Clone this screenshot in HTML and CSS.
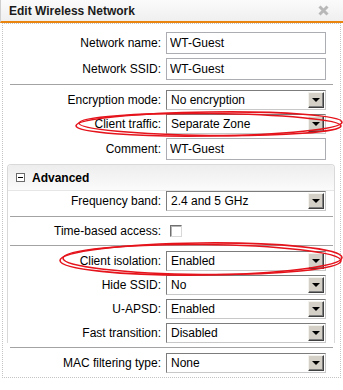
FILE: index.html
```html
<!DOCTYPE html>
<html>
<head>
    <title>Edit Wireless Network</title>
    <link rel="stylesheet" href="styles.css">
</head>
<body>
    <div class="dialog">
        <div class="titlebar">
            <span class="title">Edit Wireless Network</span>
            <svg class="close" width="11" height="11" viewBox="0 0 11 11">
                <path d="M1.5 1.5 L9.5 9.5 M9.5 1.5 L1.5 9.5" stroke="#b8b8b8" stroke-width="3"/>
            </svg>
        </div>

        <div class="content">
            <div class="row">
                <label>Network name:</label>
                <input class="text" type="text" value="WT-Guest">
            </div>
            <div class="row">
                <label>Network SSID:</label>
                <input class="text" type="text" value="WT-Guest">
            </div>
            <div class="sep"></div>
            <div class="row">
                <label>Encryption mode:</label>
                <div class="combo"><span>No encryption</span><span class="btn"></span></div>
            </div>
            <div class="row">
                <label>Client traffic:</label>
                <div class="combo"><span>Separate Zone</span><span class="btn"></span></div>
            </div>
            <div class="row">
                <label>Comment:</label>
                <input class="text" type="text" value="WT-Guest">
            </div>

            <div class="panel">
                <div class="panel-head">
                    <span class="toggle"></span>
                    <span>Advanced</span>
                </div>
                <div class="panel-body">
                    <div class="row">
                        <label>Frequency band:</label>
                        <div class="combo"><span>2.4 and 5 GHz</span><span class="btn"></span></div>
                    </div>
                    <div class="sep"></div>
                    <div class="row tall">
                        <label>Time-based access:</label>
                        <span class="check"></span>
                    </div>
                    <div class="sep after"></div>
                    <div class="row">
                        <label>Client isolation:</label>
                        <div class="combo"><span>Enabled</span><span class="btn"></span></div>
                    </div>
                    <div class="row">
                        <label>Hide SSID:</label>
                        <div class="combo"><span>No</span><span class="btn"></span></div>
                    </div>
                    <div class="row">
                        <label>U-APSD:</label>
                        <div class="combo"><span>Enabled</span><span class="btn"></span></div>
                    </div>
                    <div class="row">
                        <label>Fast transition:</label>
                        <div class="combo"><span>Disabled</span><span class="btn"></span></div>
                    </div>
                </div>
            </div>

            <div class="sep"></div>
            <div class="row last">
                <label>MAC filtering type:</label>
                <div class="combo"><span>None</span><span class="btn"></span></div>
            </div>
        </div>

        <!-- hand-drawn highlight marks -->
        <svg class="marks" width="343" height="390" viewBox="0 0 343 390">
            <g fill="none" stroke="#e5131b" stroke-width="1.6">
                <ellipse cx="209" cy="124" rx="133" ry="12" transform="rotate(-0.8 209 124)"/>
                <ellipse cx="210" cy="124.5" rx="131" ry="11" transform="rotate(0.6 210 124)"/>
                <ellipse cx="201" cy="259" rx="141" ry="16" transform="rotate(-0.6 201 259)"/>
                <ellipse cx="202" cy="259.5" rx="139" ry="15" transform="rotate(0.5 201 259)"/>
            </g>
        </svg>
    </div>
</body>
</html>
```

FILE: styles.css
```css
body {
    margin: 0;
    background-color: #fff;
    font-family: "Liberation Sans", Arial, sans-serif;
    font-size: 12px;
    color: #000;
}

.dialog {
    position: relative;
    width: 343px;
    height: 390px;
}

.titlebar {
    height: 21px;
    display: flex;
    align-items: center;
    justify-content: space-between;
    padding: 0 14px 0 8px;
    border-left: 1px solid #cfcfcf;
    border-bottom: 2px solid #ea850f;
    background: linear-gradient(#fbfbfb, #efefef);
}

.title {
    font-weight: bold;
    color: #1a1a1a;
    padding-top: 1px;
}

.close {
    display: block;
}

.content {
    margin: 0 2px;
    padding: 8px 0 4px;
    border: 1px dotted #c4c4c4;
}

.row {
    display: flex;
    align-items: center;
    margin-bottom: 4px;
}

.row label {
    width: 158px;
    margin-right: 5px;
    text-align: right;
    white-space: nowrap;
}

.row.tall {
    height: 28px;
    margin-bottom: 0;
}

.row.last {
    margin-bottom: 0;
}

.text {
    width: 160px;
    height: 22px;
    box-sizing: border-box;
    margin: 0;
    padding: 0 3px;
    border: 1px solid #abadb3;
    font-family: inherit;
    font-size: 12px;
    color: #000;
    outline: none;
}

.combo {
    width: 160px;
    height: 20px;
    box-sizing: border-box;
    display: flex;
    align-items: center;
    justify-content: space-between;
    padding: 0 1px 0 4px;
    border: 1px solid;
    border-color: #7c7c7c #c8c8c8 #c8c8c8 #7c7c7c;
    background-color: #fff;
}

.btn {
    position: relative;
    width: 16px;
    height: 16px;
    box-sizing: border-box;
    border: 1px solid;
    border-color: #f4f3ee #404040 #404040 #f4f3ee;
    box-shadow: inset -1px -1px 0 #808080;
    background-color: #d4d0c8;
}

.btn::after {
    content: "";
    position: absolute;
    left: 3px;
    top: 5px;
    border-left: 4px solid transparent;
    border-right: 4px solid transparent;
    border-top: 4px solid #000;
}

.check {
    width: 12px;
    height: 12px;
    box-sizing: border-box;
    margin-left: 4px;
    border: 1px solid;
    border-color: #6f6f6f #d8d8d8 #d8d8d8 #6f6f6f;
    box-shadow: inset 1px 1px 0 #b4b4b4;
    background-color: #fff;
}

.sep {
    height: 1px;
    margin: 0 7px 5px;
    background-color: #a3a3a3;
}

.sep.after {
    margin-bottom: 5px;
}

.panel {
    margin: 0 5px 0 4px;
    border: 1px solid #d9d9d9;
    border-bottom: none;
    border-radius: 4px 4px 0 0;
}

.panel-head {
    height: 25px;
    display: flex;
    align-items: center;
    gap: 7px;
    padding-left: 8px;
    border-bottom: 1px solid #e6e6e6;
    border-radius: 4px 4px 0 0;
    background: linear-gradient(#ededed, #fbfbfb);
    font-weight: bold;
}

.toggle {
    position: relative;
    width: 9px;
    height: 9px;
    box-sizing: border-box;
    border: 1px solid #6b6b6b;
    background-color: #fff;
}

.toggle::after {
    content: "";
    position: absolute;
    left: 1px;
    top: 3px;
    width: 5px;
    height: 1px;
    background-color: #000;
}

.panel-body .row label {
    width: 153px;
}

.panel-body .sep {
    margin: 5px 1px 0 2px;
}

.panel-body .sep.after {
    margin-top: 0;
    margin-bottom: 5px;
}

.marks {
    position: absolute;
    left: 0;
    top: 0;
    pointer-events: none;
}
```
